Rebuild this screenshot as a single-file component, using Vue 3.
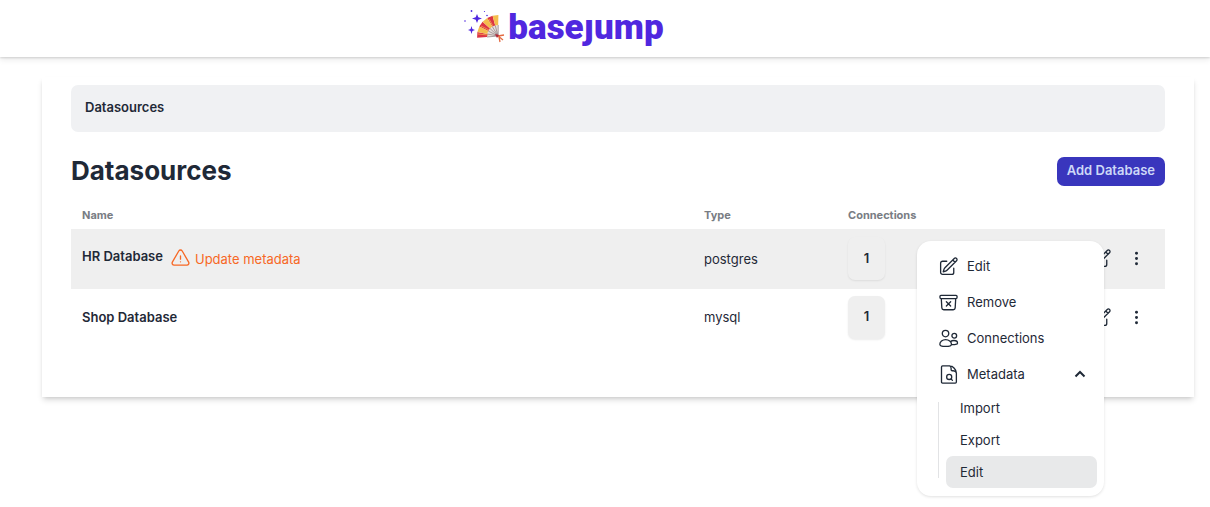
<script setup>
import { ref } from 'vue'

const rows = ref([
  { name: 'HR Database', type: 'postgres', connections: 1, stale: true, open: true },
  { name: 'Shop Database', type: 'mysql', connections: 1, stale: false, open: false },
])
const metadataOpen = ref(true)

const pencil =
  'm16.862 4.487 1.687-1.688a1.875 1.875 0 1 1 2.652 2.652L10.582 16.07a4.5 4.5 0 0 1-1.897 1.13L6 18l.8-2.685a4.5 4.5 0 0 1 1.13-1.897l8.932-8.931Zm0 0L19.5 7.125M18 14v4.75A2.25 2.25 0 0 1 15.75 21H5.25A2.25 2.25 0 0 1 3 18.75V8.25A2.25 2.25 0 0 1 5.25 6H10'

const items = [
  { label: 'Edit', path: pencil },
  {
    label: 'Remove',
    path: 'm20.25 7.5-.625 10.632a2.25 2.25 0 0 1-2.247 2.118H6.622a2.25 2.25 0 0 1-2.247-2.118L3.75 7.5m5.8 3.7 4.9 4.9m0-4.9-4.9 4.9M3.375 7.5h17.25c.621 0 1.125-.504 1.125-1.125v-1.5c0-.621-.504-1.125-1.125-1.125H3.375c-.621 0-1.125.504-1.125 1.125v1.5c0 .621.504 1.125 1.125 1.125Z',
  },
  {
    label: 'Connections',
    path: 'M12.3 6.4a3.7 3.7 0 1 1-7.4 0 3.700 3.700 0 0 1 7.400 0ZM21.300 8.800a2.700 2.700 0 1 1-5.400 0 2.700 2.700 0 0 1 5.400 0ZM8.700 13.200c-3.700 0-6.600 2.700-6.600 5.400 0 1.700 3 2.500 6.600 2.500s6.700-.800 6.700-2.500c0-2.700-3-5.400-6.700-5.400ZM15.400 18.900c3.600.300 6.900-.300 6.900-1.600 0-1.600-1.700-3-4-3-1.700 0-3.200.500-4 1.400',
  },
]
</script>

<template>
  <div class="page">
    <header class="topbar">
      <a href="#" class="brand" aria-label="basejump">
        <svg class="fan" viewBox="0 0 42 36" aria-hidden="true">
          <path d="M23 27 23.200 23.900 24.200 21 26 18.500 28.300 16.600 31.200 15.400 34.200 15 34 26Z" fill="#e6dfdc" />
          <path d="M13.100 27.800 13.400 22 23.200 23.900 23 27ZM15.300 16.500 18.600 11.700 26 18.500 24.200 21ZM23.200 8 28.600 5.700 31.200 15.400 28.300 16.600Z" fill="#dc3444" />
          <path d="M13.400 22 15.300 16.500 24.200 21 23.200 23.900ZM18.600 11.700 23.200 8 28.300 16.600 26 18.500ZM28.600 5.700 34.400 5 34.200 15 31.200 15.400Z" fill="#f4bd4d" />
          <path d="M14 24 24 25M17 16 25 20M25 9 29 16" fill="none" stroke="#f18b4a" stroke-width="1" />
          <path d="M23 27 34 26 23.200 24M24.200 21 34 26 26 18.500M28.300 16.600 34 26 31.200 15.400M34.200 15V26" fill="none" stroke="#8c7a7d" stroke-width=".7" />
          <path d="m33 25 6 5M34 26l6-1M35 27l1 5" fill="none" stroke="#e46b42" stroke-width="1.300" />
          <path d="m31 24 4 1-2 3Z" fill="#b3283c" />
          <path d="m13 4 1.300 3.200L18 8.500l-3.700 1.300L13 13l-1.300-3.200L8 8.500l3.700-1.300ZM7.500 16l.900 3 2.600 1-2.600 1-.900 3-.900-3L4 20l2.600-1Z" fill="#5027df" />
          <g fill="#5027df"><circle cx="7.500" cy="1" r=".9" /><circle cx="1" cy="11" r=".8" /><circle cx="20.500" cy="1.500" r=".6" /><circle cx="23" cy="5.500" r=".8" /></g>
        </svg>
        <span class="wordmark">baseȷump</span>
      </a>
    </header>

    <main class="card">
      <nav class="crumbs" aria-label="Breadcrumb"><a href="#">Datasources</a></nav>
      <div class="heading">
        <h1>Datasources</h1>
        <button type="button" class="add">Add Database</button>
      </div>
      <table>
        <colgroup>
          <col />
          <col class="col-type" />
          <col class="col-conn" />
          <col class="col-actions" />
        </colgroup>
        <thead>
          <tr>
            <th scope="col">Name</th>
            <th scope="col">Type</th>
            <th scope="col">Connections</th>
            <td></td>
          </tr>
        </thead>
        <tbody>
          <tr v-for="row in rows" :key="row.name" :class="{ active: row.open }">
            <td>
              <div class="name">
                <a href="#" class="db">{{ row.name }}</a>
                <a v-if="row.stale" href="#" class="warning">
                  <svg class="icon" viewBox="0 0 24 24" aria-hidden="true">
                    <path d="M12 9v3.750m-9.303 3.376c-.866 1.500.217 3.374 1.948 3.374h14.710c1.730 0 2.813-1.874 1.948-3.374L13.949 3.378c-.866-1.500-3.032-1.500-3.898 0L2.697 16.126ZM12 15.750h.007v.008H12v-.008Z" />
                  </svg>
                  Update metadata
                </a>
              </div>
            </td>
            <td>{{ row.type }}</td>
            <td><button type="button" class="count">{{ row.connections }}</button></td>
            <td class="actions-cell">
              <div class="actions">
                <button type="button" class="icon-button" :aria-label="`Edit ${row.name}`">
                  <svg class="icon" viewBox="0 0 24 24" aria-hidden="true"><path :d="pencil" /></svg>
                </button>
                <button type="button" class="icon-button" :aria-label="`More for ${row.name}`" :aria-expanded="row.open" @click="row.open = !row.open">
                  <svg class="icon dots" viewBox="0 0 20 20" aria-hidden="true">
                    <circle cx="10" cy="5" r="1.400" /><circle cx="10" cy="10" r="1.400" /><circle cx="10" cy="15" r="1.400" />
                  </svg>
                </button>
              </div>
              <div v-if="row.open" class="menu">
                <button v-for="item in items" :key="item.label" type="button" class="item">
                  <svg class="icon" viewBox="0 0 24 24" aria-hidden="true"><path :d="item.path" /></svg>
                  {{ item.label }}
                </button>
                <button type="button" class="item" :aria-expanded="metadataOpen" @click="metadataOpen = !metadataOpen">
                  <svg class="icon" viewBox="0 0 24 24" aria-hidden="true">
                    <path d="M5.200 2.200h8.300c3.500 0 7.500 4.300 7.500 8v10.400c0 .700-.500 1.200-1.200 1.200H5.200c-.700 0-1.200-.500-1.200-1.200V3.400c0-.700.500-1.200 1.200-1.200ZM13.500 2.200c1.300.600 1.500 1.700 1.500 3v1.300c0 .700.500 1.200 1.200 1.200h1.300c1.600 0 3 .900 3.500 2.500M15 17.200l1.500 1.500" />
                    <circle cx="12.800" cy="14.800" r="2.900" />
                  </svg>
                  Metadata
                  <svg class="chevron" viewBox="0 0 12 8" aria-hidden="true"><path d="m1.500 6.500 4.500-4.500 4.500 4.500" /></svg>
                </button>
                <div v-if="metadataOpen" class="submenu">
                  <button type="button">Import</button>
                  <button type="button">Export</button>
                  <button type="button" class="selected">Edit</button>
                </div>
              </div>
            </td>
          </tr>
        </tbody>
      </table>
    </main>
  </div>
</template>

<style>
body {
  margin: 0;
  background: #fff;
}
</style>

<style scoped>
.page {
  min-height: 100vh;
  color: #1f2937;
  font-family: Inter, "Liberation Sans", sans-serif;
  font-size: 13px;
  line-height: 20px;
}
.page * {
  box-sizing: border-box;
}
a {
  color: inherit;
  text-decoration: none;
}
button {
  border: 0;
  padding: 0;
  background: none;
  color: inherit;
  font: inherit;
  cursor: pointer;
}
.topbar {
  display: flex;
  justify-content: center;
  height: 57px;
  padding-right: 82px;
  box-shadow: 0 1px 2px rgba(0, 0, 0, 0.14), 0 3px 6px rgba(0, 0, 0, 0.08);
}
.brand {
  display: flex;
  align-items: center;
  gap: 2px;
  height: 55px;
}
.fan {
  width: 42px;
  height: 36px;
}
.wordmark {
  color: #5027df;
  font-family: Roboto, "Noto Sans", sans-serif;
  font-size: 35px;
  font-weight: 900;
  line-height: 55px;
}
.card {
  margin: 20px 16px 0 42px;
  padding: 8px 29px 51px;
  box-shadow: 0 4px 6px -1px rgba(0, 0, 0, 0.14), 0 2px 4px -2px rgba(0, 0, 0, 0.14);
}
.crumbs {
  height: 47px;
  padding: 12px 14px;
  border-radius: 7px;
  background: #f0f1f3;
  font-weight: 600;
}
.heading {
  display: flex;
  align-items: center;
  justify-content: space-between;
  margin-top: 23px;
}
h1 {
  margin: 0;
  font-size: 26px;
  font-weight: 700;
  line-height: 32px;
}
.add {
  height: 29px;
  padding: 0 10px 2px;
  border-radius: 7px;
  background: #3936bd;
  color: #cdd8f7;
  font-weight: 600;
}
table {
  width: 100%;
  margin-top: 14px;
  border-collapse: collapse;
  table-layout: fixed;
}
.col-type {
  width: 144px;
}
.col-conn {
  width: 144px;
}
.col-actions {
  width: 184px;
}
th,
td {
  padding: 0 11px;
  text-align: left;
}
th {
  height: 28px;
  color: #797d84;
  font-size: 11px;
  font-weight: 700;
}
tbody td {
  height: 57px;
  padding-bottom: 1px;
}
tbody .active td {
  height: 60px;
}
.active {
  background: #efefef;
}
.name {
  display: flex;
  align-items: flex-start;
  gap: 7px;
}
.db {
  font-weight: 600;
}
.warning {
  display: flex;
  align-items: center;
  gap: 4px;
  padding: 2px 0;
  color: #f76825;
}
.icon {
  display: block;
  flex: none;
  width: 21px;
  height: 21px;
  fill: none;
  stroke: currentColor;
  stroke-width: 1.5;
  stroke-linecap: round;
  stroke-linejoin: round;
}
.count {
  display: block;
  width: 37px;
  height: 43px;
  padding-bottom: 2px;
  border-radius: 7px;
  background: #efefef;
  box-shadow: 0 1px 2px rgba(0, 0, 0, 0.08);
  font-weight: 600;
}
.actions-cell {
  position: relative;
}
.actions {
  display: flex;
  justify-content: flex-end;
  gap: 14px;
  padding-right: 7px;
}
.dots {
  fill: currentColor;
  stroke: none;
}
.menu {
  position: absolute;
  z-index: 2;
  top: 12px;
  right: 61px;
  width: 187px;
  padding: 7px 7px 8px;
  border-radius: 14px;
  background: #fff;
  box-shadow: 0 1px 3px rgba(0, 0, 0, 0.12);
}
.item {
  display: flex;
  align-items: center;
  gap: 8px;
  width: 100%;
  height: 36px;
  padding: 0 14px 1px;
}
.item .icon {
  margin-top: 1px;
}
.chevron {
  width: 12px;
  height: 8px;
  margin-right: -3px;
  margin-left: auto;
  fill: none;
  stroke: #1f2937;
  stroke-width: 2;
}
.submenu {
  position: relative;
  display: flex;
  flex-direction: column;
  margin-left: 14px;
  padding-left: 8px;
}
.submenu::before {
  content: "";
  position: absolute;
  top: 10px;
  bottom: 10px;
  left: 0;
  width: 1px;
  background: #e2e3e5;
}
.submenu button {
  height: 32px;
  padding: 0 14px 1px;
  border-radius: 7px;
  text-align: left;
}
.submenu .selected {
  background: #e8e9ea;
}
</style>
